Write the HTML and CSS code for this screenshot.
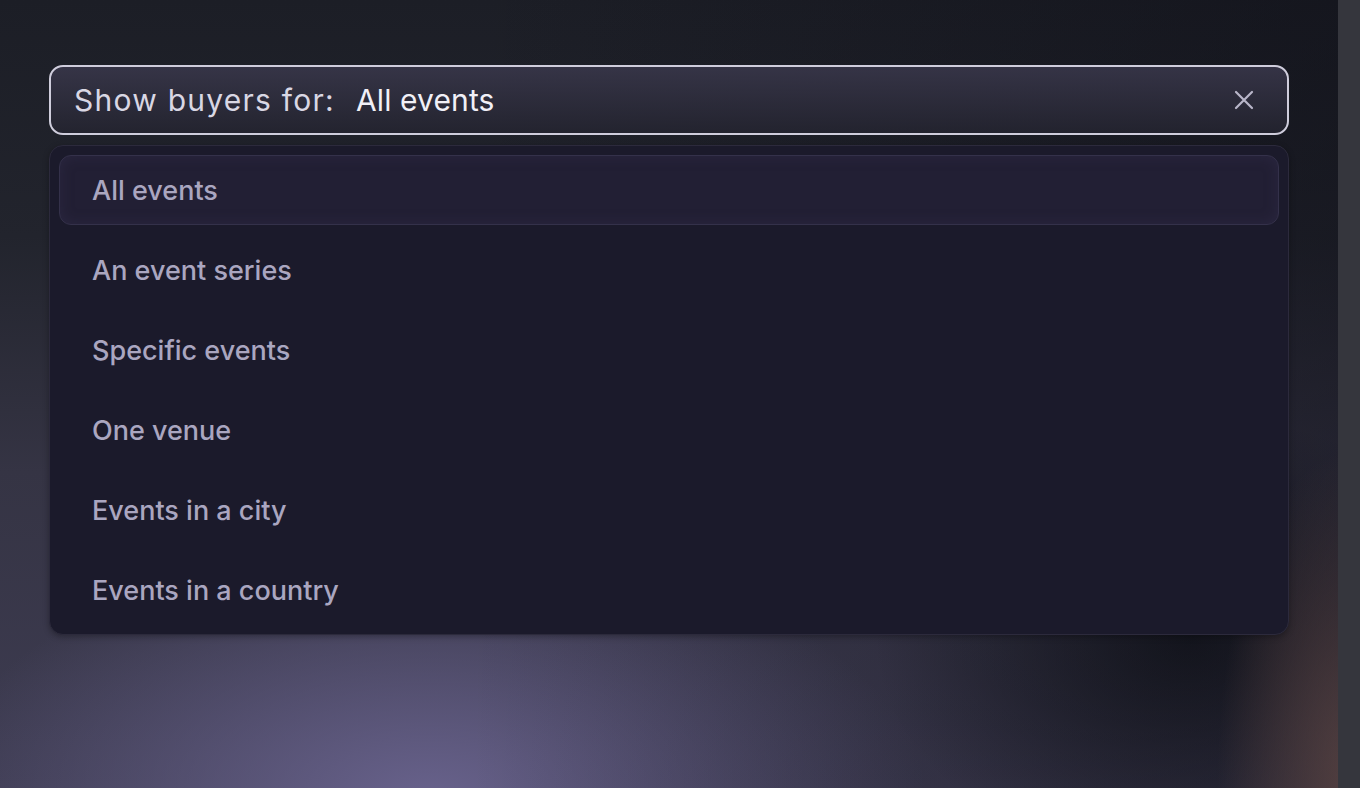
FILE: index.html
```html
<!DOCTYPE html>
<html>
<head>
<meta charset="utf-8">
<link rel="stylesheet" href="styles.css">
</head>
<body>
<div class="page">
  <div class="stage">
    <div class="wrap">
      <div class="field">
        <span class="label">Show buyers for:</span>
        <span class="value">All events</span>
        <button class="clear" aria-label="Clear">
          <svg width="22" height="22" viewBox="0 0 22 22"><path d="M3 3L19 19M19 3L3 19" stroke="#b9b6c9" stroke-width="2.2" stroke-linecap="round" fill="none"/></svg>
        </button>
      </div>
      <ul class="menu">
        <li class="item active">All events</li>
        <li class="item">An event series</li>
        <li class="item">Specific events</li>
        <li class="item">One venue</li>
        <li class="item">Events in a city</li>
        <li class="item">Events in a country</li>
      </ul>
    </div>
  </div>
  <div class="rail"></div>
</div>
</body>
</html>
```
FILE: styles.css
```css
html, body {
  margin: 0;
  padding: 0;
  width: 1360px;
  height: 788px;
  overflow: hidden;
  font-family: Inter, "Noto Sans", sans-serif;
}
.page {
  display: flex;
  width: 1360px;
  height: 788px;
}
.stage {
  flex: 1;
  position: relative;
  background:
    radial-gradient(ellipse 170px 420px at 1350px 780px, rgba(130,98,94,1), rgba(130,98,94,0) 78%),
    radial-gradient(ellipse 420px 300px at 1190px 640px, rgba(22,24,32,0.95), rgba(22,24,32,0) 75%),
    radial-gradient(ellipse 620px 320px at 430px 800px, rgba(104,98,140,1), rgba(104,98,140,0) 80%),
    linear-gradient(180deg, #1c1e26 0%, #22242d 30%, #353444 60%, #3e3c52 100%);
}
.stage::before {
  content: "";
  position: absolute;
  inset: 0;
  background: linear-gradient(90deg, rgba(0,0,0,0) 35%, rgba(10,10,18,0.4) 100%);
  pointer-events: none;
}
.rail {
  width: 22px;
  background: #35363d;
}
.wrap {
  position: relative;
  padding: 65px 49px 0 49px;
}
.field {
  display: flex;
  align-items: center;
  height: 66px;
  border: 2px solid #cfcddc;
  border-radius: 14px;
  padding: 0 23px;
  background: linear-gradient(180deg, rgba(58,56,76,0.85), rgba(36,36,48,0.85));
  color: #e4e2ee;
  font-size: 30px;
}
.label {
  letter-spacing: 1.25px;
  color: #d9d7e4;
}
.value {
  margin-left: 21px;
  color: #f1f0f7;
  letter-spacing: 0.1px;
}
.clear {
  margin-left: auto;
  margin-right: 9px;
  background: none;
  border: 0;
  padding: 0;
  display: flex;
}
.menu {
  list-style: none;
  margin: 10px 0 0 0;
  padding: 9px;
  background: #1b1a2b;
  border: 1px solid #2c2a3c;
  border-radius: 14px;
  display: flex;
  flex-direction: column;
  gap: 10px;
  box-shadow: 0 2px 6px rgba(0,0,0,0.3);
}
.item {
  height: 70px;
  display: flex;
  align-items: center;
  padding-left: 32px;
  border: 1px solid transparent;
  border-radius: 12px;
  color: #aaa6c0;
  font-size: 27px;
  font-weight: 500;
  box-sizing: border-box;
}
.item.active {
  background: #221f34;
  border-color: #34314a;
  box-shadow: inset 0 0 14px rgba(60,55,90,0.35);
}
```
